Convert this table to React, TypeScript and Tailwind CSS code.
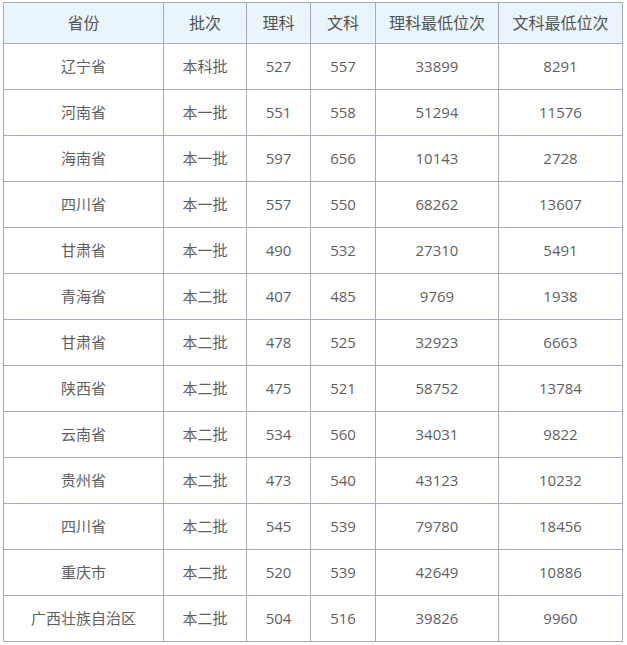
const rows: [string, string, string, string, string, string][] = [
  ["辽宁省", "本科批", "527", "557", "33899", "8291"],
  ["河南省", "本一批", "551", "558", "51294", "11576"],
  ["海南省", "本一批", "597", "656", "10143", "2728"],
  ["四川省", "本一批", "557", "550", "68262", "13607"],
  ["甘肃省", "本一批", "490", "532", "27310", "5491"],
  ["青海省", "本二批", "407", "485", "9769", "1938"],
  ["甘肃省", "本二批", "478", "525", "32923", "6663"],
  ["陕西省", "本二批", "475", "521", "58752", "13784"],
  ["云南省", "本二批", "534", "560", "34031", "9822"],
  ["贵州省", "本二批", "473", "540", "43123", "10232"],
  ["四川省", "本二批", "545", "539", "79780", "18456"],
  ["重庆市", "本二批", "520", "539", "42649", "10886"],
  ["广西壮族自治区", "本二批", "504", "516", "39826", "9960"],
];

const headers = ["省份", "批次", "理科", "文科", "理科最低位次", "文科最低位次"];
const widths = ["w-[160px]", "w-[83px]", "w-[64px]", "w-[65px]", "w-[123px]", "w-[124px]"];

export default function App() {
  return (
    <div className="h-[645px] w-[627px] overflow-hidden bg-white pl-[3px] pt-[2px] font-['Open_Sans','Noto_Sans_CJK_SC',sans-serif] text-[15px] text-[#5f5f5f]">
      <table className="w-[620px] table-fixed border-collapse">
        <colgroup>
          {widths.map((w, i) => (
            <col key={i} className={w} />
          ))}
        </colgroup>
        <thead>
          <tr className="h-[41px] bg-[#eaf4fc]">
            {headers.map((h) => (
              <th key={h} className="border border-[#a9aab8] text-center text-[16px] font-normal text-[#555]">
                {h}
              </th>
            ))}
          </tr>
        </thead>
        <tbody>
          {rows.map((r, i) => (
            <tr key={i} className="h-[46px]">
              {r.map((c, j) => (
                <td key={j} className="border border-[#a9aab8] text-center">
                  {c}
                </td>
              ))}
            </tr>
          ))}
        </tbody>
      </table>
    </div>
  );
}
